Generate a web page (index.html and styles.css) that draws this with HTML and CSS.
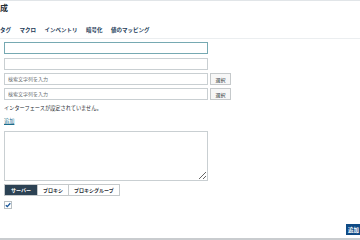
FILE: index.html
```html
<!DOCTYPE html>
<html lang="ja">
<head>
    <meta charset="UTF-8">
    <title>作成</title>
    <link rel="stylesheet" href="styles.css">
</head>
<body>
    <div class="page">
        <h1 class="page-title">成</h1>

        <ul class="tabs">
            <li>タグ</li>
            <li>マクロ</li>
            <li>インベントリ</li>
            <li>暗号化</li>
            <li>値のマッピング</li>
        </ul>

        <form class="form">
            <input class="field field-focus" type="text" value="">
            <input class="field" type="text" value="">
            <div class="field-row">
                <input class="field" type="text" placeholder="検索文字列を入力">
                <button type="button" class="btn-select">選択</button>
            </div>
            <div class="field-row">
                <input class="field" type="text" placeholder="検索文字列を入力">
                <button type="button" class="btn-select">選択</button>
            </div>

            <p class="note">インターフェースが設定されていません。</p>
            <a class="link-add" href="#">追加</a>

            <textarea class="area"></textarea>

            <div class="seg">
                <span class="seg-item active">サーバー</span>
                <span class="seg-item">プロキシ</span>
                <span class="seg-item">プロキシグループ</span>
            </div>

            <label class="check">
                <svg width="8" height="8" viewBox="0 0 8 8">
                    <path d="M1.8 4.2 L3.3 5.6 L6.3 2.3" fill="none" stroke="#1e5a9c" stroke-width="1.4"/>
                </svg>
            </label>

            <div class="actions">
                <button type="button" class="btn-primary">追加</button>
            </div>
        </form>
    </div>
</body>
</html>
```

FILE: styles.css
```css
body, html {
    margin: 0;
    padding: 0;
    width: 360px;
    height: 240px;
    overflow: hidden;
    background: #fff;
    font-family: "Liberation Sans", "Noto Sans CJK JP", sans-serif;
    font-size: 6px;
    color: #1f2c33;
}
.page {
    border-top: 1px solid #e1e5e8;
    border-bottom: 2px solid #c9cccf;
    box-sizing: border-box;
    height: 240px;
    display: flex;
    flex-direction: column;
}
.page-title {
    margin: 2px 0 0 0;
    font-size: 8px;
    line-height: 11px;
    font-weight: bold;
}
.tabs {
    list-style: none;
    margin: 12px 0 0 0;
    padding: 0 0 4px 0;
    display: flex;
    gap: 8.5px;
    border-bottom: 1px solid #ebeef0;
    line-height: 8px;
    font-size: 5.5px;
}
.tabs li {
    font-weight: bold;
    color: #1b3a57;
}
.form {
    flex: 1;
    display: flex;
    flex-direction: column;
    align-items: flex-start;
    padding: 3px 0 0 4px;
}
.field {
    box-sizing: border-box;
    width: 204px;
    height: 12px;
    margin: 0 0 4px 0;
    padding: 0 3px;
    border: 1px solid #c9cfd2;
    font-family: inherit;
    font-size: 5px;
    color: #1f2c33;
    outline: none;
}
.field::placeholder {
    color: #6a6f72;
}
.field-focus {
    border-color: #76a9b2;
}
.field-focus + .field {
    margin-bottom: 3px;
}
.field-row {
    display: flex;
    gap: 2px;
    margin-bottom: 3px;
}
.field-row .field {
    margin: 0;
}
.btn-select {
    box-sizing: border-box;
    width: 21px;
    height: 12px;
    padding: 0;
    border: 1px solid #c5c9cb;
    background: #f7f7f7;
    font-family: inherit;
    font-size: 5px;
    color: #1f2c33;
}
.note {
    margin: 1px 0 0 0;
    line-height: 8px;
    font-size: 5.2px;
}
.link-add {
    margin-top: 5px;
    line-height: 8px;
    font-size: 5.2px;
    color: #1b6d8c;
    text-decoration: underline;
}
.area {
    box-sizing: border-box;
    width: 204px;
    height: 50px;
    margin-top: 6px;
    border: 1px solid #c9cfd2;
    resize: vertical;
}
.seg {
    display: flex;
    margin-top: 3px;
    border: 1px solid #c5c9cb;
    height: 12px;
    box-sizing: border-box;
}
.seg-item {
    padding: 0 5px;
    line-height: 10px;
    font-weight: bold;
    font-size: 5px;
    border-left: 1px solid #c5c9cb;
}
.seg-item:first-child {
    border-left: none;
}
.seg-item.active {
    background: #2c4254;
    color: #fff;
    padding: 0 6px;
}
.check {
    display: block;
    margin-top: 5px;
    width: 8px;
    height: 8px;
    box-sizing: border-box;
    border: 1px solid #b8bfc3;
    background: #fff;
    line-height: 0;
}
.check svg {
    margin: -1px 0 0 -1px;
}
.actions {
    align-self: stretch;
    display: flex;
    justify-content: flex-end;
    margin-top: 15px;
}
.btn-primary {
    height: 11px;
    padding: 0 1px 0 2px;
    border: none;
    background: #0f4a85;
    color: #fff;
    font-family: inherit;
    font-size: 5.5px;
    font-weight: bold;
}
```
